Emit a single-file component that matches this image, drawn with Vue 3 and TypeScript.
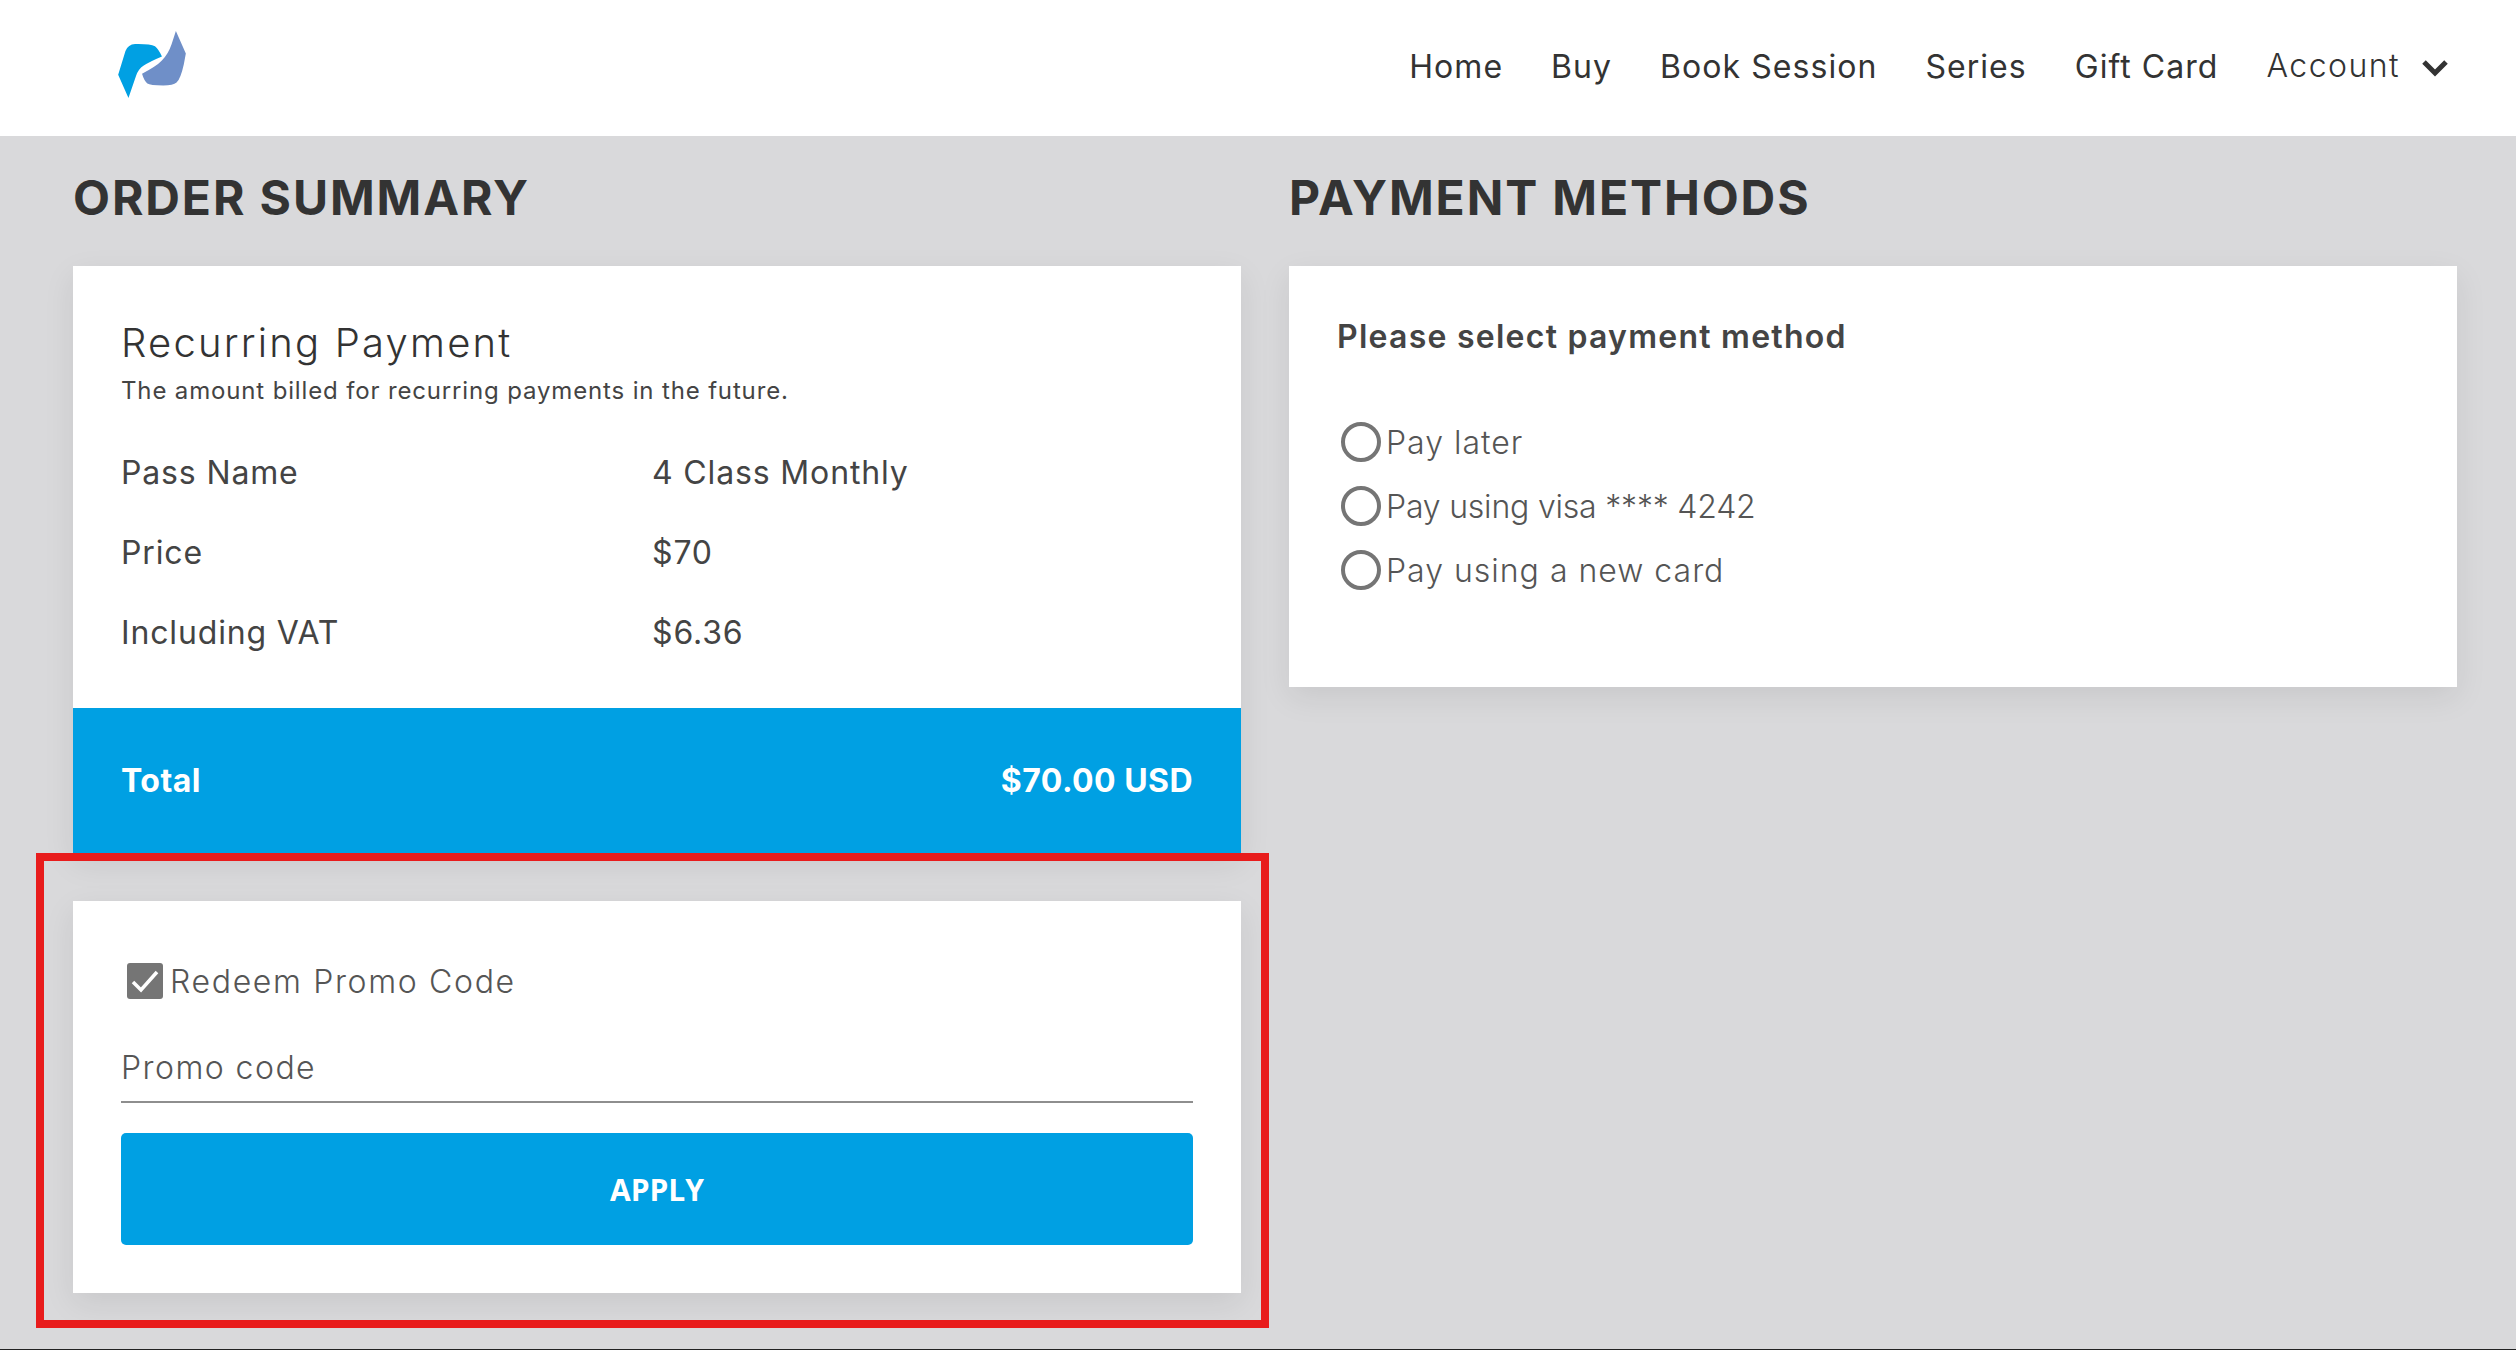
<script setup lang="ts">
const navLinks = ["Home", "Buy", "Book Session", "Series", "Gift Card"];

const orderRows = [
  { label: "Pass Name", value: "4 Class Monthly" },
  { label: "Price", value: "$70" },
  { label: "Including VAT", value: "$6.36" },
];

const paymentMethods = [
  { label: "Pay later", digits: false },
  { label: "Pay using visa **** 4242", digits: true },
  { label: "Pay using a new card", digits: false },
];
</script>

<template>
  <div class="page">
    <header class="topbar">
      <svg class="logo" viewBox="174 90 204 202">
        <path
          fill="#00a0e3"
          d="M174 222 L196 150 Q204 130 225 129 Q270 128 285 136 Q296 145 306 167 Q270 182 250 195 Q235 205 228 225 L205 292 Z"
        />
        <path
          fill="#6f8fc8"
          d="M348 90 L378 158 L372 190 Q362 235 350 245 Q340 254 310 254 Q270 254 262 248 Q252 240 246 219 Q290 196 305 180 Q325 160 335 130 Z"
        />
      </svg>
      <nav class="nav">
        <a v-for="link in navLinks" :key="link" class="nav-link">{{ link }}</a>
        <a class="nav-link account">
          Account
          <svg class="chevron" viewBox="0 0 26 18" fill="none" stroke="#333" stroke-width="5">
            <polyline points="2 3 13 14 24 3"></polyline>
          </svg>
        </a>
      </nav>
    </header>

    <main class="columns">
      <section class="column">
        <h2 class="section-title">ORDER SUMMARY</h2>

        <div class="card order-card">
          <div class="order-body">
            <h3 class="order-title">Recurring Payment</h3>
            <p class="order-sub">The amount billed for recurring payments in the future.</p>
            <div class="order-rows">
              <div v-for="row in orderRows" :key="row.label" class="order-row">
                <span>{{ row.label }}</span>
                <span>{{ row.value }}</span>
              </div>
            </div>
          </div>
          <div class="total-bar">
            <span class="total-label">Total</span>
            <span class="total-value">$70.00 USD</span>
          </div>
        </div>

        <div class="card promo-card">
          <label class="promo-check">
            <span class="checkbox">
              <svg viewBox="0 0 36 36" fill="none" stroke="#fff" stroke-width="3.5">
                <polyline points="6 19 14 27 30 9"></polyline>
              </svg>
            </span>
            Redeem Promo Code
          </label>
          <input class="promo-input" type="text" placeholder="Promo code" />
          <button type="button" class="apply-button">APPLY</button>
          <div class="highlight"></div>
        </div>
      </section>

      <section class="column">
        <h2 class="section-title">PAYMENT METHODS</h2>

        <div class="card payment-card">
          <h4 class="payment-title">Please select payment method</h4>
          <div class="payment-list">
            <label
              v-for="method in paymentMethods"
              :key="method.label"
              class="payment-option"
              :class="{ digits: method.digits }"
            >
              <input type="radio" name="payment" class="radio" />
              {{ method.label }}
            </label>
          </div>
        </div>
      </section>
    </main>
  </div>
</template>

<style>
html,
body {
  margin: 0;
  background: #d9d9db;
}
</style>

<style scoped>
.page {
  height: 1350px;
  box-sizing: border-box;
  overflow: hidden;
  background: #d9d9db;
  border-bottom: 1px solid #222;
  font-family: Inter, "Liberation Sans", sans-serif;
  color: #333;
}

.topbar {
  height: 136px;
  background: #fff;
  display: flex;
  align-items: center;
  justify-content: space-between;
  padding: 0 68px 0 118px;
}

.logo {
  width: 68px;
  height: 67px;
  margin-top: -8px;
}

.nav {
  display: flex;
  align-items: center;
  gap: 48px;
  margin-top: -2px;
}

.nav-link {
  font-size: 32px;
  line-height: 40px;
  letter-spacing: 1.05px;
  color: #333;
}

.account {
  display: flex;
  align-items: center;
  gap: 22px;
  font-weight: 300;
  letter-spacing: 1.45px;
  margin-top: -3px;
}

.chevron {
  width: 26px;
  height: 18px;
  margin-top: 4px;
}

.columns {
  display: grid;
  grid-template-columns: 1168px 1168px;
  gap: 48px;
  padding: 26px 0 0 73px;
}

.section-title {
  margin: 0 0 32px;
  font-size: 48px;
  line-height: 72px;
  font-weight: 700;
  letter-spacing: 1.9px;
  color: #333;
}

.card {
  background: #fff;
  box-shadow: 0 10px 30px rgba(0, 0, 0, 0.08);
}

.order-body {
  padding: 52px 48px 35px;
}

.order-title {
  margin: 0;
  font-size: 40px;
  line-height: 50px;
  font-weight: 300;
  letter-spacing: 2.2px;
}

.order-sub {
  margin: 8px 0 0;
  font-size: 24px;
  line-height: 30px;
  letter-spacing: 0.85px;
  color: #444;
}

.order-rows {
  margin-top: 27px;
}

.order-row {
  display: grid;
  grid-template-columns: 531px 1fr;
  font-size: 32px;
  line-height: 80px;
  letter-spacing: 0.85px;
  color: #444;
}

.total-bar {
  height: 145px;
  padding: 0 48px;
  background: #00a0e3;
  display: flex;
  align-items: center;
  justify-content: space-between;
  color: #fff;
  font-size: 32px;
  font-weight: 700;
  letter-spacing: 0.45px;
}

.promo-card {
  position: relative;
  margin-top: 48px;
  padding: 58px 48px 48px;
}

.promo-check {
  display: flex;
  align-items: center;
  gap: 7px;
  height: 44px;
  padding-left: 6px;
  font-size: 32px;
  font-weight: 300;
  letter-spacing: 1.65px;
  color: #555;
}

.checkbox {
  width: 36px;
  height: 36px;
  border-radius: 3px;
  background: #757575;
  display: block;
}

.checkbox svg {
  display: block;
  width: 36px;
  height: 36px;
}

.promo-input {
  display: block;
  box-sizing: border-box;
  width: 100%;
  height: 70px;
  margin-top: 30px;
  padding: 0;
  border: none;
  border-bottom: 2px solid #8e8e8e;
  outline: none;
  font-family: inherit;
  font-size: 32px;
  font-weight: 300;
  letter-spacing: 1.45px;
  color: #555;
}

.promo-input::placeholder {
  color: #555;
  opacity: 1;
}

.apply-button {
  display: block;
  width: 100%;
  height: 112px;
  margin-top: 30px;
  border: none;
  border-radius: 5px;
  background: #00a0e3;
  color: #fff;
  font-family: "Open Sans", sans-serif;
  font-size: 30px;
  font-weight: 700;
}

/* red annotation box drawn over the screenshot */
.highlight {
  position: absolute;
  top: -48px;
  right: -28px;
  bottom: -35px;
  left: -37px;
  border: 8px solid #e81c1c;
  pointer-events: none;
}

.payment-card {
  padding: 51px 48px 85px;
}

.payment-title {
  margin: 0;
  font-size: 32px;
  line-height: 40px;
  font-weight: 600;
  letter-spacing: 1.25px;
  color: #444;
}

.payment-list {
  margin-top: 53px;
}

.payment-option {
  display: flex;
  align-items: center;
  gap: 5px;
  height: 64px;
  font-size: 32px;
  font-weight: 300;
  letter-spacing: 1px;
  color: #555;
}

.payment-option.digits {
  letter-spacing: -0.2px;
}

.radio {
  appearance: none;
  box-sizing: border-box;
  width: 40px;
  height: 40px;
  margin: 0 0 0 4px;
  border: 4px solid #757575;
  border-radius: 50%;
}
</style>
